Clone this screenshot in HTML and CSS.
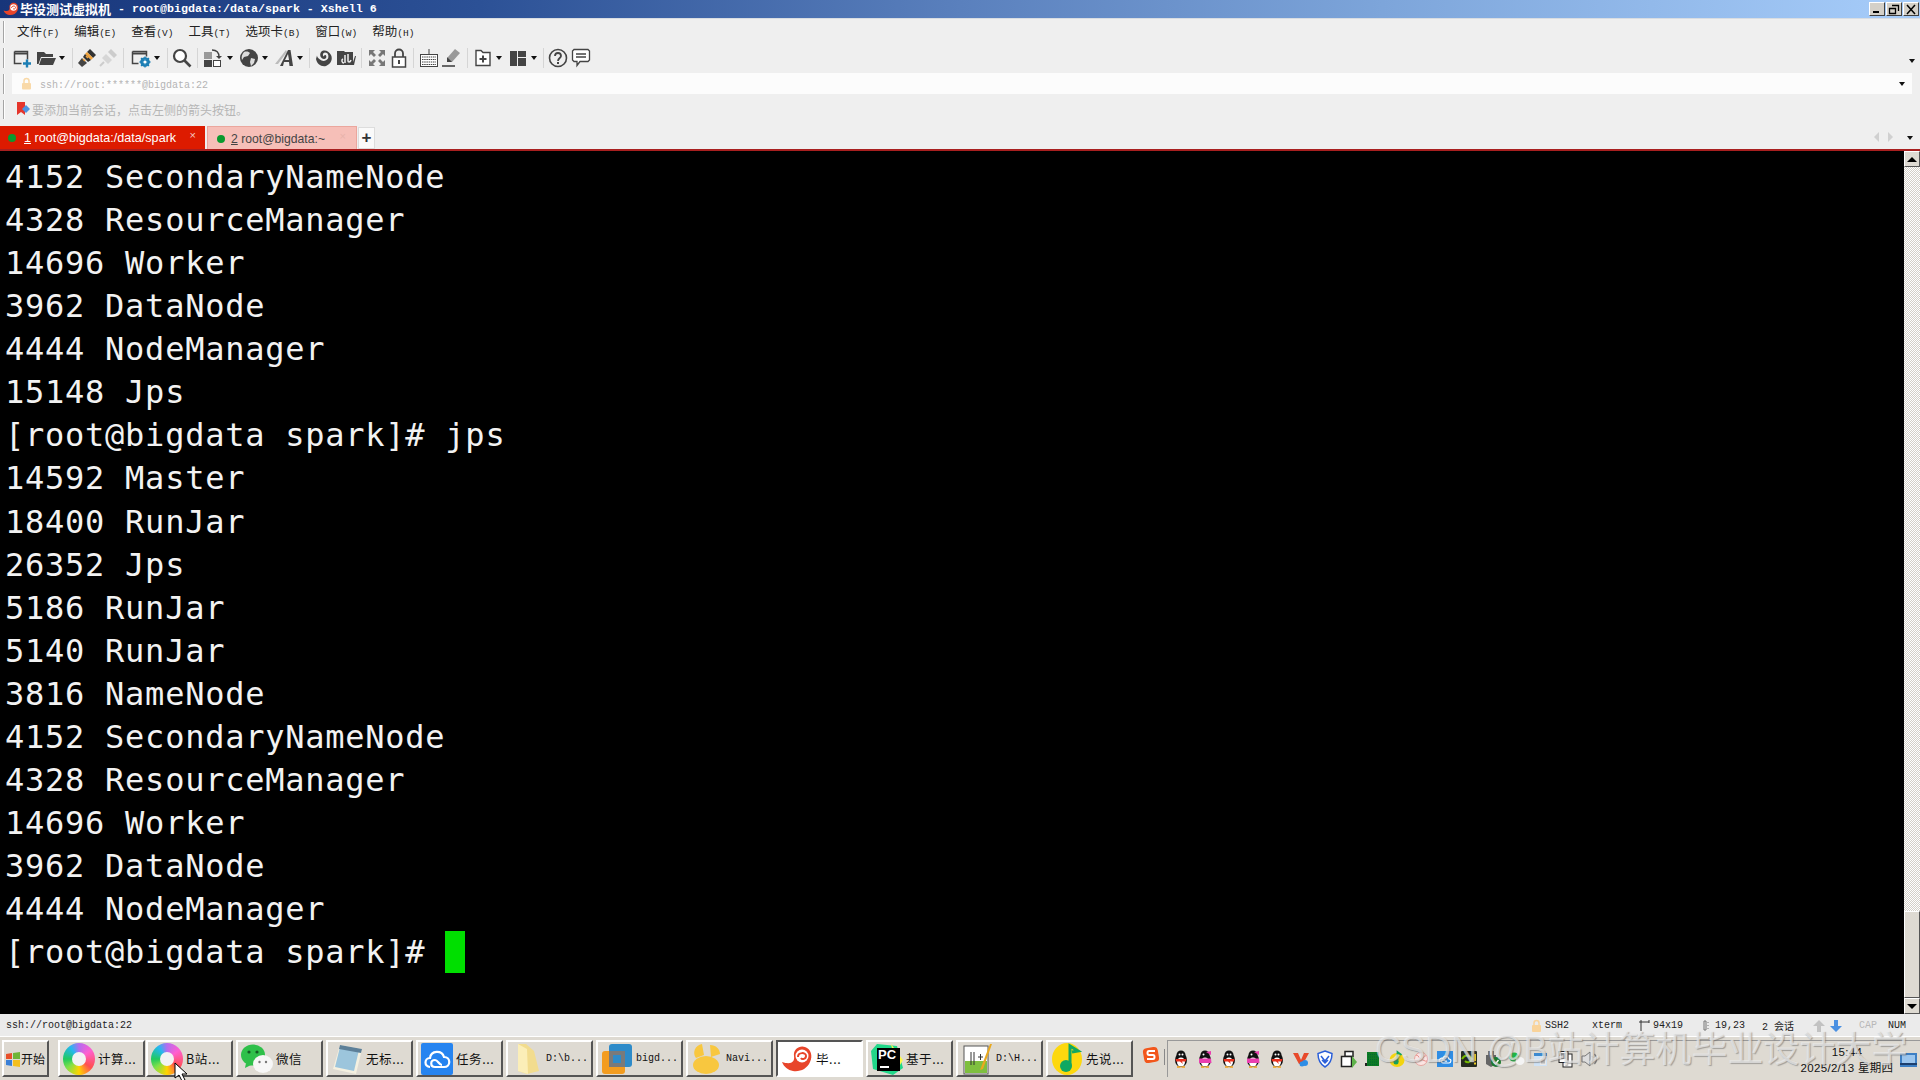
FILE: index.html
```html
<!DOCTYPE html>
<html lang="zh">
<head>
<meta charset="utf-8">
<title>Xshell 6</title>
<link rel="stylesheet" href="styles.css">
</head>
<body>
<svg class="defs" width="0" height="0" aria-hidden="true">
  <symbol id="new" viewBox="0 0 20 20"><path d="M2.5 3.5h13v8M2.5 3.5v12h7" fill="none" stroke="#444" stroke-width="1.5"/><path d="M2 5.5h14" stroke="#444" stroke-width="2"/><path d="M11 15.5h8M15 11.5v8" stroke="#1d7fb5" stroke-width="2.4"/></symbol>
  <symbol id="open" viewBox="0 0 20 20"><path d="M1 4h7l2 2h7v3H5L2.5 16H1z" fill="#444"/><path d="M5.5 10H20l-3 7H3z" fill="#444"/></symbol>
  <symbol id="plug" viewBox="0 0 20 20"><path d="M13 1l6 6-3 3-6-6z" fill="#333"/><path d="M10 4l6 6-2 2-6-6z" fill="#f1a33c"/><path d="M8 6l6 6-3 2-5-5z" fill="#333"/><path d="M5 10l5 5-5 4-4-4z" fill="#444"/><path d="M6 11l2 2M9 8l2 2" stroke="#f1a33c" stroke-width="1.5"/></symbol>
  <symbol id="plugoff" viewBox="0 0 20 20"><path d="M13 1l6 6-3 3-6-6z" fill="#ccc"/><path d="M8 6l6 6-4 4-6-6z" fill="#d6d6d6"/><path d="M6 14l-4 4" stroke="#ccc" stroke-width="2"/></symbol>
  <symbol id="cfg" viewBox="0 0 20 20"><path d="M1.5 3.5h14v5M1.5 3.5v12h6" fill="none" stroke="#444" stroke-width="1.5"/><path d="M1 5.5h15" stroke="#444" stroke-width="2"/><circle cx="14" cy="14" r="3.6" fill="none" stroke="#1d7fb5" stroke-width="2.4"/><path d="M14 8.5v11M8.5 14h11M10 10l8 8M18 10l-8 8" stroke="#1d7fb5" stroke-width="1.3"/><circle cx="14" cy="14" r="1.6" fill="#fff"/></symbol>
  <symbol id="search" viewBox="0 0 20 20"><circle cx="8" cy="8" r="6" fill="#fff" stroke="#444" stroke-width="2.2"/><path d="M12.5 12.5l6 6" stroke="#444" stroke-width="2.6"/></symbol>
  <symbol id="xfer" viewBox="0 0 20 20"><rect x="1" y="4" width="8" height="7" fill="#999"/><rect x="1" y="12" width="8" height="7" fill="#444"/><rect x="10.500" y="12.500" width="7" height="6" fill="#fff" stroke="#444"/><path d="M9 2c4 0 7 2 7 7" fill="none" stroke="#444" stroke-width="1.4"/><path d="M13 8h6l-3 3z" fill="#444"/></symbol>
  <symbol id="globe" viewBox="0 0 20 20"><circle cx="10" cy="10" r="9" fill="#444"/><path d="M5 4c3-1 5 0 6 1l-2 3-4 1-2 3c-1-3 0-6 2-8zM12 10l4 1-1 4-3 3-1-4z" fill="#ddd"/></symbol>
  <symbol id="font" viewBox="0 0 20 20"><path d="M1 16L12 2l1 2L4 16z" fill="#bbb"/><path d="M6 18h3l1-4h5l.5 4H19L16.500 2H14zM11 12l3-6 1 6z" fill="#444"/></symbol>
  <symbol id="spiral" viewBox="0 0 20 20"><path d="M2 11c1 5 5 8 10 7 5-2 7-7 5-11S10 1 7 4c-2 3 0 7 3 7 2 0 3-2 2-3.500-1-1-2 0-2 1-2-1-1-4 1-4 3 0 4 3 3 6-2 3-6 3-8 1-2-1-3-3-3-4z" fill="#444"/></symbol>
  <symbol id="xftp" viewBox="0 0 20 20"><path d="M1 3h7l1 1h8v13H1z" fill="#444"/><path d="M19 8l1 0-2 9h-2z" fill="#444"/><path d="M9 7v8M8 15c-2 0-3-3-1-4M12 6v7c0 1 2 2 3-1" fill="none" stroke="#eee" stroke-width="1.5"/></symbol>
  <symbol id="full" viewBox="0 0 20 20"><path d="M2 2h6L6 4l3 3-2 2-3-3-2 2zM18 2v6l-2-2-3 3-2-2 3-3-2-2zM2 18v-6l2 2 3-3 2 2-3 3 2 2zM18 18h-6l2-2-3-3 2-2 3 3 2-2z" fill="#777"/></symbol>
  <symbol id="lock" viewBox="0 0 20 20"><path d="M6 9V5.500a4 4 0 0 1 8 0V9" fill="none" stroke="#444" stroke-width="1.8"/><rect x="3.500" y="9" width="13" height="10" fill="#fff" stroke="#444" stroke-width="1.5"/><rect x="9" y="12" width="2" height="4" fill="#444"/></symbol>
  <symbol id="kbd" viewBox="0 0 20 20"><path d="M10 1v5" stroke="#444"/><rect x="1.500" y="6.500" width="17" height="12" fill="#fff" stroke="#444"/><path d="M3 9h14M3 11.500h14M3 14h14M3 16.500h14" stroke="#444" stroke-width="1.200" stroke-dasharray="1.500 .7"/></symbol>
  <symbol id="mark" viewBox="0 0 20 20"><path d="M14 1l5 4-8 9H6l1-5z" fill="#999"/><path d="M6 9l5 5H6z" fill="#444"/><path d="M1 18h13" stroke="#444" stroke-width="1.6"/></symbol>
  <symbol id="addtab" viewBox="0 0 20 20"><path d="M3 2.500h5l2 2h7v13H3z" fill="#fff" stroke="#444" stroke-width="1.4"/><path d="M6.500 11h7M10 7.500v7" stroke="#444" stroke-width="2"/></symbol>
  <symbol id="layout" viewBox="0 0 20 20"><rect x="2" y="3" width="7" height="15" fill="#444"/><rect x="10" y="3" width="8" height="6" fill="#444"/><rect x="10" y="10" width="8" height="8" fill="#444"/></symbol>
  <symbol id="help" viewBox="0 0 20 20"><circle cx="10" cy="10" r="8.500" fill="none" stroke="#444" stroke-width="1.600"/><path d="M7 8c0-4 6-4 6 0 0 2-3 2-3 5" fill="none" stroke="#444" stroke-width="1.800"/><rect x="9" y="14" width="2" height="2" fill="#444"/></symbol>
  <symbol id="chat" viewBox="0 0 20 20"><path d="M3 1.500h14l1.500 1.500v9l-1.500 1.500h-8l-3 4v-4H3L1.500 12V3z" fill="#fff" stroke="#444" stroke-width="1.300"/><path d="M5 6h10M5 9h10" stroke="#444" stroke-width="1.300"/></symbol>
  <symbol id="qq" viewBox="0 0 18 18"><ellipse cx="9" cy="10" rx="6" ry="7" fill="#111"/><circle cx="9" cy="5" r="4.500" fill="#111"/><ellipse cx="9" cy="12" rx="4" ry="4.500" fill="#fff"/><circle cx="7.500" cy="4.500" r="1" fill="#fff"/><circle cx="10.500" cy="4.500" r="1" fill="#fff"/><path d="M3.500 9h11l-.5 2.500h-4l1 2.500-3-2.500H4z" fill="#e8311f"/><path d="M5 17h3.500M9.500 17H13" stroke="#f2a31d" stroke-width="1.500"/></symbol>
  <symbol id="qqp" viewBox="0 0 18 18"><ellipse cx="9" cy="10" rx="6" ry="7" fill="#111"/><circle cx="9" cy="5" r="4.500" fill="#111"/><ellipse cx="9" cy="12" rx="4" ry="4.500" fill="#fff"/><path d="M10 2l5-1v4z" fill="#ea3fb0"/><path d="M3 8.500h12l.5 4.500H3z" fill="#ea3fb0"/><circle cx="7.500" cy="4.500" r="1" fill="#fff"/><path d="M5 17h3.500M9.500 17H13" stroke="#f2a31d" stroke-width="1.500"/></symbol>
  <symbol id="vb" viewBox="0 0 18 18"><path d="M1 3h5l3 7 3-7h5l-6 11H7z" fill="#e8492a"/><circle cx="13" cy="13" r="3" fill="#2e8ee6"/><circle cx="10" cy="14" r="2.500" fill="#2e8ee6"/></symbol>
  <symbol id="shield" viewBox="0 0 18 18"><path d="M9 1l7 2.500C16 10 14 14 9 17 4 14 2 10 2 3.500z" fill="#fff" stroke="#2b5fd8" stroke-width="1.500"/><path d="M5 6l4 5 4-5M6 10l3 3 3-3" fill="none" stroke="#2b5fd8" stroke-width="1.500"/></symbol>
  <symbol id="copy" viewBox="0 0 18 18"><rect x="5" y="1.500" width="8" height="5" fill="#fff" stroke="#222" stroke-width="1.500"/><rect x="1.500" y="6.500" width="10" height="10" fill="#fff" stroke="#222" stroke-width="1.500"/><path d="M12 6l5 6-5 6z" fill="#5fb34a"/></symbol>
  <symbol id="chip" viewBox="0 0 18 18"><rect x="3" y="2" width="12" height="14" fill="#0d7a24"/><path d="M4 4.500h10M4 7h10M4 9.500h10M4 12h10M4 14.500h10" stroke="#063" stroke-width="1" stroke-dasharray="1 1"/><rect x="1" y="13" width="2" height="3" fill="#222"/></symbol>
  <symbol id="qmus" viewBox="0 0 18 18"><ellipse cx="9" cy="10" rx="7.500" ry="7" fill="#f3d40f"/><circle cx="8" cy="12" r="2.500" fill="#13a35c"/><path d="M9.500 12V2l4 3" fill="none" stroke="#13a35c" stroke-width="1.800"/></symbol>
  <symbol id="flower" viewBox="0 0 18 18"><circle cx="9" cy="9" r="6.500" fill="#fbe4e2" stroke="#e6a6a0"/><path d="M4 5c3 0 3 4 5 4s3-4 5-3M3 11c3-1 4 0 6-1s4 2 6 1" fill="none" stroke="#e98e88"/></symbol>
  <symbol id="cloudt" viewBox="0 0 18 18"><rect width="16" height="16" x="1" y="1" fill="#2f8de4"/><path d="M4 12c-2-3 2-5 3-3 0-3 5-4 6 0 3 0 2 4 0 4H7c-2 0-2-3 0-3s2 2 4 1" fill="none" stroke="#fff" stroke-width="1.200"/></symbol>
  <symbol id="nvd" viewBox="0 0 18 18"><rect x="1" y="1" width="16" height="16" rx="1" fill="#262b20"/><path d="M2 9c3-5 8-4 10 0-2 4-5 4-7 2" fill="none" stroke="#76b900" stroke-width="2"/><rect x="14" y="4" width="2" height="7" fill="#f0d020"/><rect x="14" y="12.500" width="2" height="2" fill="#f0d020"/></symbol>
  <symbol id="safe" viewBox="0 0 18 18"><path d="M5 1v5M9 1v5" stroke="#555" stroke-width="1.500"/><path d="M2 5h10v9l-5 3-5-3z" fill="#666"/><circle cx="12" cy="12" r="5" fill="#1c7a2e"/><path d="M9.500 12l2 2 3-4" fill="none" stroke="#fff" stroke-width="1.400"/></symbol>
  <symbol id="wcht" viewBox="0 0 18 18"><ellipse cx="6" cy="7" rx="5" ry="4.500" fill="#1fb842"/><ellipse cx="12" cy="11" rx="4.500" ry="4" fill="#f4f4f4"/></symbol>
  <symbol id="netp" viewBox="0 0 18 18"><rect x="2" y="3" width="13" height="13" fill="#cfe2f5"/><rect x="2" y="3" width="13" height="3" fill="#3d8ad0"/><rect x="8" y="8" width="6" height="7" fill="#e8e8e8"/><path d="M10 9.500v4M12 9.500v4" stroke="#888"/></symbol>
  <symbol id="disp" viewBox="0 0 18 18"><rect x="7" y="4" width="9" height="13" fill="#fff" stroke="#222"/><rect x="3" y="1.500" width="9" height="11" fill="#fff" stroke="#222"/><path d="M5 4h5M5 6h5M5 8h5" stroke="#222"/></symbol>
  <symbol id="vol" viewBox="0 0 18 18"><path d="M2 6h3l5-4v14l-5-4H2z" fill="#ddd" stroke="#777"/><path d="M12 6c1.500 2 1.500 4 0 6M14.500 4c2.500 3 2.500 7 0 10" fill="none" stroke="#777" stroke-width="1.200"/></symbol>
  <symbol id="sogou" viewBox="0 0 18 18"><rect x="1.500" y="1.500" width="15" height="15" rx="4" fill="#f2571c" transform="rotate(-10 9 9)"/><path d="M13 5H7c-2 0-2 4 0 4h4c2 0 2 4 0 4H5" fill="none" stroke="#fff" stroke-width="2"/></symbol>
  <symbol id="xs" viewBox="0 0 32 32"><path d="M1 19c9 3 13 0 12-6C12 6 19 2 24 4c6 2 8 9 5 15-3 7-10 10-17 9C7 27 3 24 1 19z" fill="#e8452a"/><circle cx="21" cy="13" r="6.500" fill="#fff"/><path d="M17 14c0-5 8-5 8-1 0 3-4 4-5 2" fill="none" stroke="#e8452a" stroke-width="2"/></symbol>
</svg>

<div class="app">
  <header class="titlebar">
    <svg class="title-logo" width="16" height="16"><use href="#xs"/></svg>
    <span class="title-cjk">毕设测试虚拟机</span><span class="title-txt"> - root@bigdata:/data/spark - Xshell 6</span>
    <div class="winbtns">
      <button class="winbtn"><svg width="12" height="10"><rect x="2" y="7" width="6" height="2" fill="#000"/></svg></button>
      <button class="winbtn"><svg width="12" height="11"><path d="M4 1.500h6.500V7M1.500 4.500h6v5h-6z" fill="none" stroke="#000" stroke-width="1.300"/></svg></button>
      <button class="winbtn winbtn-x"><svg width="12" height="11"><path d="M2 1l8 9M10 1l-8 9" stroke="#000" stroke-width="1.500"/></svg></button>
    </div>
  </header>

  <nav class="menubar">
    <i class="grip grip-menu"></i>
    <span class="menu">文件<b>(F)</b></span><span class="menu">编辑<b>(E)</b></span><span class="menu">查看<b>(V)</b></span><span class="menu">工具<b>(T)</b></span><span class="menu">选项卡<b>(B)</b></span><span class="menu">窗口<b>(W)</b></span><span class="menu">帮助<b>(H)</b></span>
  </nav>

  <div class="toolbar">
    <i class="grip grip-tool"></i>
    <svg class="ic g5"><use href="#new"/></svg>
    <svg class="ic g4"><use href="#open"/></svg><i class="ar g1"></i>
    <i class="sp g5"></i>
    <svg class="ic g4"><use href="#plug"/></svg>
    <svg class="ic g1"><use href="#plugoff"/></svg>
    <i class="sp g5"></i>
    <svg class="ic g7"><use href="#cfg"/></svg><i class="ar g1"></i>
    <i class="sp g5"></i>
    <svg class="ic g4"><use href="#search"/></svg>
    <i class="sp g5"></i>
    <svg class="ic g5"><use href="#xfer"/></svg><i class="ar g2"></i>
    <svg class="ic g4"><use href="#globe"/></svg><i class="ar g1"></i>
    <svg class="ic g4"><use href="#font"/></svg><i class="ar g1"></i>
    <i class="sp g4"></i>
    <svg class="ic g4"><use href="#spiral"/></svg>
    <svg class="ic g2"><use href="#xftp"/></svg>
    <i class="sp g5"></i>
    <svg class="ic g5"><use href="#full"/></svg>
    <svg class="ic g2"><use href="#lock"/></svg>
    <i class="sp g4"></i>
    <svg class="ic g5"><use href="#kbd"/></svg>
    <svg class="ic g2"><use href="#mark"/></svg>
    <i class="sp g6"></i>
    <svg class="ic g5"><use href="#addtab"/></svg><i class="ar g1"></i>
    <svg class="ic g4"><use href="#layout"/></svg><i class="ar g1"></i>
    <i class="sp g4"></i>
    <svg class="ic g4"><use href="#help"/></svg>
    <svg class="ic g3"><use href="#chat"/></svg>
    <i class="ar tool-more"></i>
  </div>

  <div class="addrbar">
    <i class="grip grip-addr"></i>
    <div class="addr">
      <svg class="addr-lock" width="13" height="13"><path d="M4 6V4a2.500 2.500 0 0 1 5 0v2" fill="none" stroke="#f9d9a8" stroke-width="1.500"/><rect x="2" y="6" width="9" height="6.500" rx="1" fill="#f9d9a8"/></svg>
      <span class="addr-txt">ssh://root:******@bigdata:22</span>
      <i class="ar addr-more"></i>
    </div>
  </div>

  <div class="favbar">
    <i class="grip grip-fav"></i>
    <svg class="fav-ic" width="16" height="16"><path d="M1 1h8v13l-4-3-4 3z" fill="#e5352b"/><path d="M6 8l4-4 4 4-4 4z" fill="#4d94e0"/></svg>
    <span>要添加当前会话，点击左侧的箭头按钮。</span>
  </div>

  <div class="tabbar">
    <div class="tab tab-on"><i class="dot"></i><span><u>1</u> root@bigdata:/data/spark</span><em>×</em></div>
    <div class="tab tab-off"><i class="dot"></i><span><u>2</u> root@bigdata:~</span><em>×</em></div>
    <div class="tab-add">+</div>
    <div class="tab-nav">
      <i class="nav-l"></i><i class="nav-r"></i><i class="ar nav-more"></i>
    </div>
  </div>
  <div class="redline"></div>

  <main class="termwrap">
<pre class="term">4152 SecondaryNameNode
4328 ResourceManager
14696 Worker
3962 DataNode
4444 NodeManager
15148 Jps
[root@bigdata spark]# jps
14592 Master
18400 RunJar
26352 Jps
5186 RunJar
5140 RunJar
3816 NameNode
4152 SecondaryNameNode
4328 ResourceManager
14696 Worker
3962 DataNode
4444 NodeManager
[root@bigdata spark]# <span class="cursor"> </span></pre>
    <div class="scroll">
      <div class="sbtn"><i class="up"></i></div>
      <div class="track"></div>
      <div class="thumb"></div>
      <div class="sbtn"><i class="down"></i></div>
    </div>
  </main>

  <div class="status">
    <span class="st-left">ssh://root@bigdata:22</span>
    <div class="st-right">
      <span class="c61"><svg width="11" height="13"><path d="M3 6V4a2.500 2.500 0 0 1 5 0v2" fill="none" stroke="#f9d39a" stroke-width="1.500"/><rect x="1" y="6" width="9" height="7" rx="1" fill="#f9d39a"/></svg>SSH2</span>
      <span class="c47">xterm</span>
      <span class="c63"><svg width="11" height="11"><path d="M2 11V2h8M0 2h2M2 0v2M10 0v3" fill="none" stroke="#333"/></svg>94x19</span>
      <span class="c60"><svg width="10" height="11"><path d="M2 1v9h2V1zM6 2v1M6 5v1M6 8v1" fill="none" stroke="#777"/></svg>19,23</span>
      <span class="c51">2 会话</span>
      <span class="c17"><svg width="12" height="12"><path d="M6 0l6 6H8v6H4V6H0z" fill="#c2c2c2"/></svg></span>
      <span class="c29"><svg width="12" height="12"><path d="M6 12L0 6h4V0h4v6h4z" fill="#4a90e2"/></svg></span>
      <span class="c29 off">CAP</span>
      <span>NUM</span>
    </div>
  </div>

  <footer class="taskbar">
    <div class="start">
      <svg width="16" height="16"><path d="M1 3l6-1v6H1z" fill="#e8502a"/><path d="M8 2l7-1v7H8z" fill="#6fb536"/><path d="M1 9h6v6l-6-1z" fill="#3a7fd6"/><path d="M8 9h7v7l-7-1z" fill="#f4bf1f"/></svg>
      <span>开始</span>
    </div>
    <div class="tasks">
      <div class="task"><span class="swirl"></span><span class="lbl">计算...</span></div>
      <div class="task t2"><span class="swirl"></span><span class="lbl">B站...</span></div>
      <div class="task"><svg class="ti" viewBox="0 0 32 32"><ellipse cx="12" cy="12" rx="12" ry="10.500" fill="#2fc04a"/><path d="M5 20l-1 5 6-3z" fill="#2fc04a"/><circle cx="8" cy="9" r="1.600" fill="#145a24"/><circle cx="16" cy="9" r="1.600" fill="#145a24"/><ellipse cx="22" cy="21" rx="10" ry="9" fill="#f7f7f7"/><circle cx="18.500" cy="19" r="1.200" fill="#777"/><circle cx="25" cy="19" r="1.200" fill="#777"/></svg><span class="lbl">微信</span></div>
      <div class="task"><svg class="ti" viewBox="0 0 32 32"><path d="M9 2l22 4-6 25L2 26z" fill="#f4f0e0"/><path d="M9 4l19 3-5 21L4 24z" fill="#9cc5dc"/><path d="M9 2l22 4-1 4L8 6z" fill="#5c7f98"/></svg><span class="lbl">无标...</span></div>
      <div class="task"><svg class="ti" viewBox="0 0 32 32"><rect width="32" height="32" rx="2" fill="#2684f0"/><path d="M9 24c-6 0-6-9 0-9 1-8 12-8 14-1 7 0 7 10 0 10h-9c-5 0-5-7 0-7 3 0 4 5 7 5" fill="none" stroke="#fff" stroke-width="2.200"/></svg><span class="lbl">任务...</span></div>
      <div class="task"><svg class="ti" viewBox="0 0 32 32"><path d="M7 1h8l8 7 5 20-12 3-9-3z" fill="#f2dc8e"/><path d="M7 1l9 5 1 25-10-3z" fill="#fbeeb8"/></svg><span class="lbl mono">D:\b...</span></div>
      <div class="task"><svg class="ti" viewBox="0 0 32 32"><rect x="8" y="1" width="23" height="23" rx="3" fill="#2e8bc9"/><rect x="1" y="8" width="23" height="23" rx="3" fill="#f39c1f"/><rect x="8" y="8" width="16" height="16" fill="#7a7a7a"/><rect x="12" y="12" width="8" height="8" fill="#2e8bc9"/></svg><span class="lbl mono">bigd...</span></div>
      <div class="task"><svg class="ti" viewBox="0 0 32 32"><ellipse cx="15" cy="22" rx="13" ry="9" fill="#f8c73f"/><path d="M5 15C1 10 4 2 11 1l2 11zM20 14l-1-12c6 0 10 4 10 9z" fill="#f8c73f"/></svg><span class="lbl mono">Navi...</span></div>
      <div class="task task-on"><svg class="ti" viewBox="0 0 32 32"><use href="#xs"/></svg><span class="lbl">毕...</span></div>
      <div class="task"><svg class="ti" viewBox="0 0 32 32"><path d="M6 1l20 2 6 22-10 7L2 26 0 8z" fill="#21d789"/><path d="M20 1l12 16-6 10z" fill="#fcf84a"/><rect x="6" y="5" width="23" height="23" fill="#000"/><path d="M9 24h9" stroke="#fff" stroke-width="2"/></svg><span class="pc">PC</span><span class="lbl">基于...</span></div>
      <div class="task"><svg class="ti" viewBox="0 0 32 32"><rect x="3" y="3" width="24" height="28" fill="#fff" stroke="#555"/><rect x="4" y="18" width="22" height="12" fill="#7fbf3f"/><path d="M10 9v13M13 9v13" stroke="#333"/><path d="M17 14h5M19.500 11v6" stroke="#333"/><path d="M31 1l-2 0-10 26 3-1z" fill="#e9a91f"/></svg><span class="lbl mono">D:\H...</span></div>
      <div class="task"><svg class="ti" viewBox="0 0 32 32"><ellipse cx="16" cy="16" rx="15" ry="16" fill="#fdd80e"/><circle cx="15" cy="23" r="6" fill="#10a862"/><path d="M19 23V3l8 5-6 1" fill="none" stroke="#10a862" stroke-width="3"/></svg><span class="lbl">先说...</span></div>
    </div>
    <svg class="sogou" width="18" height="18"><use href="#sogou"/></svg>
    <i class="tray-sep"></i>
    <div class="tray">
      <svg><use href="#qq"/></svg><svg><use href="#qqp"/></svg><svg><use href="#qq"/></svg><svg><use href="#qqp"/></svg><svg><use href="#qq"/></svg>
      <svg><use href="#vb"/></svg><svg><use href="#shield"/></svg><svg><use href="#copy"/></svg><svg><use href="#chip"/></svg><svg><use href="#qmus"/></svg><svg><use href="#flower"/></svg><svg><use href="#cloudt"/></svg><svg><use href="#nvd"/></svg><svg><use href="#safe"/></svg><svg><use href="#wcht"/></svg><svg><use href="#netp"/></svg><svg><use href="#disp"/></svg><svg><use href="#vol"/></svg>
      <div class="clock"><span>15:44</span><span>2025/2/13 星期四</span></div>
      <svg class="showdesk" width="17" height="14"><rect width="17" height="14" fill="#3d7fc4"/><rect x="2" y="2" width="13" height="8" fill="#9cc6ee"/><rect x="0" y="10" width="17" height="2" fill="#1c3f6e"/></svg>
    </div>
  </footer>

  <svg class="pointer" width="14" height="20"><path d="M1 1v15l4-3 3 6 3-1-3-6h5z" fill="#fff" stroke="#000"/></svg>
  <div class="watermark">CSDN @B站计算机毕业设计大学</div>
</div>
</body>
</html>
```
FILE: styles.css
```css
* { box-sizing: border-box; }
html, body { margin: 0; padding: 0; height: 100%; overflow: hidden; }
body { font-family: "Liberation Mono", "Noto Sans CJK SC", monospace; font-size: 11px; color: #222; background: #efefef; }
.defs { position: absolute; }
.app { position: relative; display: flex; flex-direction: column; height: 1080px; width: 1920px; overflow: hidden; }

.titlebar { height: 18px; flex: none; display: flex; align-items: center; padding-left: 3px; color: #fff; font-weight: 700;
  background: linear-gradient(90deg, #17357a 0%, #2c5196 25%, #5a80bd 50%, #7da5da 72%, #a7cdfa 100%); }
.title-logo { margin-right: 1px; flex: none; }
.title-cjk { font-family: "Noto Sans CJK SC", sans-serif; font-size: 13px; line-height: 18px; }
.title-txt { font-family: "Liberation Mono", monospace; font-size: 11.67px; white-space: pre; }
.winbtns { margin-left: auto; display: flex; gap: 1px; margin-right: 1px; }
.winbtn { width: 16px; height: 14px; padding: 0; display: flex; align-items: center; justify-content: center; background: #d4d0c8;
  border: 1px solid; border-color: #fff #404040 #404040 #fff; }

.menubar { height: 29px; flex: none; display: flex; align-items: center; background: #efefef; border-top: 1px solid #d9dde2; padding: 0 0 6px 17px; position: relative; font-family: "Noto Sans CJK SC", sans-serif; font-size: 12.5px; color: #222; }
.menu { margin-right: 15px; white-space: nowrap; }
.menu b { font: 400 9.500px "Liberation Mono", monospace; }
.grip { position: absolute; left: 3px; width: 2px; background: #a5a5a5; border-right: 1px solid #fff; }
.grip-menu { top: 2px; height: 22px; }
.grip-tool { top: 1px; height: 20px; }
.grip-addr { top: 1px; height: 20px; }
.grip-fav { top: 6px; height: 19px; }

.toolbar { height: 26px; flex: none; display: flex; align-items: center; padding: 0 0 4px 12px; position: relative; background: #efefef; }
.ic { width: 20px; height: 20px; flex: none; }
.ar { width: 10px; height: 10px; flex: none; position: relative; }
.ar::after { content: ""; position: absolute; left: 2px; top: 3px; border: 3px solid transparent; border-top: 4px solid #111; border-bottom: 0; }
.sp { width: 1px; height: 20px; background: #d5d5d5; flex: none; }
.g1 { margin-left: 1px; } .g2 { margin-left: 2px; } .g3 { margin-left: 3px; } .g4 { margin-left: 4px; }
.g5 { margin-left: 5px; } .g6 { margin-left: 6px; } .g7 { margin-left: 7px; }
.toolbar > .ic:first-of-type { margin-left: 0; }
.tool-more { margin-left: auto; margin-right: 3px; margin-top: 6px; }

.addrbar { height: 21px; flex: none; position: relative; padding: 0 8px 0 12px; background: #efefef; }
.addr { height: 21px; background: #fcfcfc; display: flex; align-items: center; color: #b4b4b4; font-size: 10px; position: relative; padding-left: 8px; }
.addr-lock { margin-right: 7px; }
.addr-txt { padding-top: 3px; }
.addr-more { position: absolute; right: 5px; top: 6px; }

.favbar { height: 32px; flex: none; position: relative; display: flex; align-items: center; padding: 0 0 2px 16px; color: #b6b6b6; font-family: "Noto Sans CJK SC", sans-serif; font-size: 12px; background: #efefef; }
.fav-ic { margin-right: 0; }

.tabbar { height: 23px; flex: none; display: flex; align-items: stretch; background: #efefef; font-family: "Liberation Sans", "Noto Sans CJK SC", sans-serif; font-size: 12.500px; position: relative; }
.tab { display: flex; align-items: center; position: relative; white-space: nowrap; padding-top: 1px; }
.tab u { text-decoration: underline; }
.tab em { position: absolute; font-style: normal; font-size: 11px; top: 3px; }
.dot { width: 8px; height: 8px; border-radius: 50%; background: #0a9a2e; flex: none; }
.tab-on { width: 205px; padding-left: 8px; background: #dd1b00; color: #fff; font-size: 12.6px; }
.tab-on .dot { margin-right: 8px; }
.tab-on em { right: 9px; color: #f6c9c2; }
.tab-off { width: 150px; margin-left: 2px; padding-left: 9px; background: #f6bfb8; border: 1px solid #eba69d; border-bottom: 0; color: #444; font-size: 12.2px; }
.tab-off .dot { margin-right: 6px; }
.tab-off em { right: 10px; color: #e8b3ab; }
.tab-add { width: 17px; margin-left: 1px; margin-top: 1px; background: #fafafa; border: 1px solid #ddd; color: #333; font-size: 17px; line-height: 20px; text-align: center; font-weight: 700; }
.tab-nav { position: absolute; right: 0; top: 0; height: 23px; width: 60px; }
.nav-l, .nav-r { position: absolute; top: 6px; border: 5px solid transparent; border-top-width: 5px; border-bottom-width: 5px; }
.nav-l { left: 14px; border-left: 0; border-right: 5px solid #d0d0d0; }
.nav-r { left: 28px; border-right: 0; border-left: 5px solid #d0d0d0; }
.nav-more { position: absolute; right: 5px; top: 7px; }
.redline { height: 2px; flex: none; background: #a81f1f; }

.termwrap { flex: 1; min-height: 0; display: flex; background: #000; }
.term { flex: 1; margin: 0; padding: 5px 0 0 5px; color: #f2f2f2; font-family: "DejaVu Sans Mono", "Liberation Mono", monospace; font-size: 32px; letter-spacing: .75px; line-height: 43.07px; }
.cursor { display: inline-block; width: 20px; height: 42px; background: #00df00; vertical-align: top; margin-top: 0; }
.scroll { width: 16px; flex: none; display: flex; flex-direction: column; }
.sbtn, .thumb { background: #dedad2; border: 1px solid; border-color: #fff #555 #555 #fff; }
.sbtn { height: 16px; flex: none; display: flex; align-items: center; justify-content: center; }
.up { border: 5px solid transparent; border-top: 0; border-bottom: 5px solid #000; }
.down { border: 5px solid transparent; border-bottom: 0; border-top: 5px solid #000; }
.track { flex: 1; background: repeating-conic-gradient(#fff 0 25%, #d4d0c8 0 50%) 0 0 / 2px 2px; }
.thumb { height: 87px; flex: none; }

.status { height: 22px; flex: none; display: flex; align-items: center; justify-content: space-between; background: #ebebeb; padding: 1px 14px 0 6px; font-size: 10px; color: #222; }
.st-right { display: flex; align-items: center; font-family: "Liberation Mono", "Noto Sans CJK SC", monospace; }
.st-right span { display: flex; align-items: center; white-space: pre; flex: none; }
.st-right span > svg { margin-right: 3px; flex: none; }
.c61 { width: 61px; } .c47 { width: 47px; } .c63 { width: 63px; } .c60 { width: 60px; } .c51 { width: 51px; } .c17 { width: 17px; } .c29 { width: 29px; }
.off { color: #b8b8b8; }

.taskbar { height: 44px; flex: none; display: flex; align-items: flex-start; background: #dedad2; border-top: 1px solid #fff; padding: 3px 0 0 2px; font-family: "Noto Sans CJK SC", sans-serif; font-size: 13px; color: #111; }
.start { width: 47px; height: 37px; display: flex; align-items: center; padding-left: 1px; flex: none; white-space: nowrap; font-size: 12px; background: #dedad2; border: 2px solid; border-color: #fff #555 #555 #fff; }
.tasks { display: flex; gap: 3px; margin-left: 9px; flex: none; }
.task { width: 87px; height: 37px; display: flex; align-items: center; padding-left: 3px; gap: 3px; position: relative; background: #dedad2; border: 2px solid; border-color: #fff #555 #555 #fff; white-space: nowrap; overflow: hidden; }
.t2 { margin-left: -2px; }
.task-on { background: #fff; border-color: #555 #fff #fff #555; }
.ti { width: 32px; height: 32px; flex: none; }
.lbl { font-size: 12.5px; letter-spacing: .6px; }
.lbl.mono { font: 400 10px "Liberation Mono", monospace; letter-spacing: 0; }
.pc { position: absolute; left: 10px; top: 5px; color: #fff; font: 700 13px "Liberation Sans", sans-serif; }
.swirl { width: 32px; height: 32px; flex: none; border-radius: 50%; position: relative; background: conic-gradient(#b46cf0, #ff5fd0 15%, #ff5050 35%, #ffd400 50%, #7ee04a 65%, #22c95f 75%, #25b8f0 90%, #b46cf0); }
.swirl::after { content: ""; position: absolute; left: 9px; top: 9px; width: 14px; height: 14px; border-radius: 50%; background: #f3f3f3; }
.sogou { margin: 6px 0 0 9px; flex: none; }
.tray-sep { width: 1px; height: 16px; background: #888; margin: 9px 0 0 4px; flex: none; }
.tray { flex: 1; height: 37px; display: flex; align-items: center; margin-left: 2px; padding-left: 1px; border-top: 1px solid #999; border-left: 1px solid #999; position: relative; }
.tray > svg { width: 18px; height: 18px; margin: 0 3px; flex: none; }
.clock { position: absolute; left: 631px; top: 3px; width: 96px; display: flex; flex-direction: column; align-items: center; font: 400 11.500px/16px "Liberation Sans", "Noto Sans CJK SC", sans-serif; letter-spacing: .3px; white-space: nowrap; }
.tray > .showdesk { position: absolute; right: 3px; top: 12px; width: 17px; height: 14px; margin: 0; }

.pointer { position: absolute; left: 174px; top: 1062px; }
.watermark { position: absolute; left: 1375px; top: 1028px; white-space: nowrap; font: 400 36px/44px "Liberation Sans", "Noto Sans CJK SC", sans-serif; color: rgba(238,238,238,.7); text-shadow: 1px 1px 1px rgba(100,100,100,.5); pointer-events: none; }
```
